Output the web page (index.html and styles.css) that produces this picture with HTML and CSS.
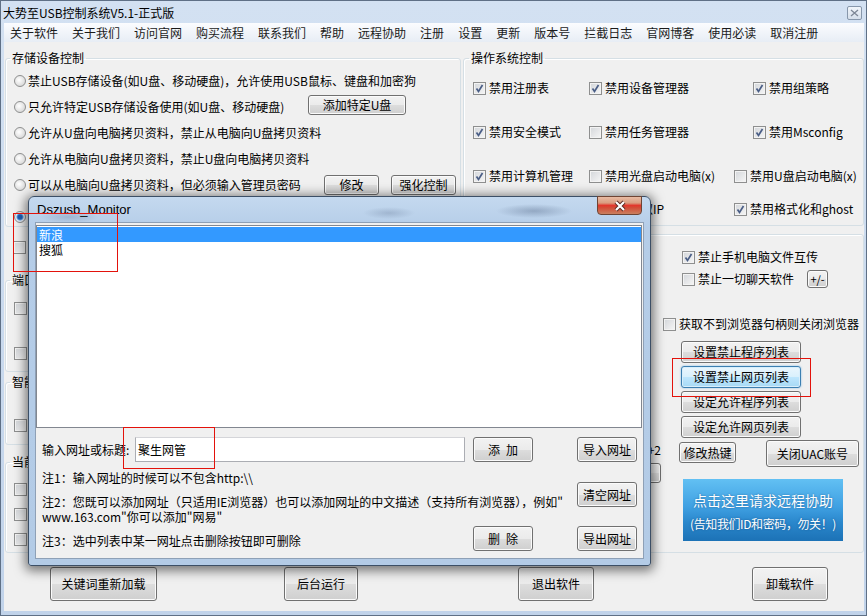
FILE: index.html
```html
<!DOCTYPE html>
<html lang="zh-CN">
<head>
    <meta charset="UTF-8">
    <title>大势至USB控制系统V5.1-正式版</title>
    <link rel="stylesheet" href="styles.css">
</head>
<body>

<div class="window">

    <!-- Title bar -->
    <div class="titlebar">
        <span class="title">大势至USB控制系统V5.1-正式版</span>
        <span class="tb-close">
            <svg width="9" height="8" viewBox="0 0 9 8"><path d="M1 1l7 6M8 1L1 7" stroke="#7d8796" stroke-width="1.3" fill="none"/></svg>
        </span>
    </div>

    <!-- Menu -->
    <div class="menubar">
        <span>关于软件</span><span>关于我们</span><span>访问官网</span><span>购买流程</span>
        <span>联系我们</span><span>帮助</span><span>远程协助</span><span>注册</span>
        <span>设置</span><span>更新</span><span>版本号</span><span>拦截日志</span>
        <span>官网博客</span><span>使用必读</span><span>取消注册</span>
    </div>

    <div class="client">

        <!-- Left column -->
        <div class="col">
            <fieldset class="grp g-storage">
                <legend>存储设备控制</legend>
                <div class="row"><i class="radio"></i>禁止USB存储设备(如U盘、移动硬盘)，允许使用USB鼠标、键盘和加密狗</div>
                <div class="row"><i class="radio"></i>只允许特定USB存储设备使用(如U盘、移动硬盘)<button class="btn btn-add">添加特定U盘</button></div>
                <div class="row"><i class="radio"></i>允许从U盘向电脑拷贝资料，禁止从电脑向U盘拷贝资料</div>
                <div class="row"><i class="radio"></i>允许从电脑向U盘拷贝资料，禁止U盘向电脑拷贝资料</div>
                <div class="row"><i class="radio"></i>可以从电脑向U盘拷贝资料，但必须输入管理员密码<button class="btn btn-mod">修改</button><button class="btn btn-strong">强化控制</button></div>
                <div class="row row-last"><i class="radio on"></i></div>
            </fieldset>

            <!-- rows below are covered by the dialog, only their boxes show -->
            <div class="free-row"><i class="cb"></i></div>

            <fieldset class="grp g-port">
                <legend>端口控制</legend>
                <div class="chk-row"><i class="cb"></i>禁用光驱</div>
                <div class="chk-row second"><i class="cb"></i>禁用软驱</div>
            </fieldset>

            <fieldset class="grp g-smart">
                <legend>智能识别</legend>
                <div class="chk-row"><i class="cb"></i>智能识别U盘</div>
            </fieldset>

            <fieldset class="grp g-now">
                <legend>当前状态</legend>
                <div class="chk-row"><i class="cb"></i></div>
                <div class="chk-row"><i class="cb"></i></div>
                <div class="chk-row"><i class="cb"></i></div>
            </fieldset>
        </div>

        <!-- Right column -->
        <div class="col">
            <fieldset class="grp g-os">
                <legend>操作系统控制</legend>
                <div class="os-grid">
                    <label class="chk"><i class="cb on"><svg viewBox="0 0 11 11"><path d="M2.5 5.5l2 3 4-6.5" /></svg></i>禁用注册表</label>
                    <label class="chk"><i class="cb on"><svg viewBox="0 0 11 11"><path d="M2.5 5.5l2 3 4-6.5" /></svg></i>禁用设备管理器</label>
                    <label class="chk"><i class="cb on"><svg viewBox="0 0 11 11"><path d="M2.5 5.5l2 3 4-6.5" /></svg></i>禁用组策略</label>

                    <label class="chk"><i class="cb on"><svg viewBox="0 0 11 11"><path d="M2.5 5.5l2 3 4-6.5" /></svg></i>禁用安全模式</label>
                    <label class="chk"><i class="cb"></i>禁用任务管理器</label>
                    <label class="chk"><i class="cb on"><svg viewBox="0 0 11 11"><path d="M2.5 5.5l2 3 4-6.5" /></svg></i>禁用Msconfig</label>

                    <label class="chk"><i class="cb on"><svg viewBox="0 0 11 11"><path d="M2.5 5.5l2 3 4-6.5" /></svg></i>禁用计算机管理</label>
                    <label class="chk"><i class="cb"></i>禁用光盘启动电脑(x)</label>
                    <label class="chk shift"><i class="cb"></i>禁用U盘启动电脑(x)</label>

                    <label class="chk"><i class="cb"></i>禁用修改IP</label>
                    <label class="chk"><i class="cb"></i>禁止获取IP</label>
                    <label class="chk shift"><i class="cb on"><svg viewBox="0 0 11 11"><path d="M2.5 5.5l2 3 4-6.5" /></svg></i>禁用格式化和ghost</label>
                </div>
            </fieldset>

            <fieldset class="grp g-net">
                <legend>网络控制</legend>
                <div class="net-grid">
                    <div class="net-left">
                        <div class="chk-row"><i class="cb"></i>禁止修改网络属性</div>
                        <div class="chk-row"><i class="cb"></i>禁止添加新网络连接</div>
                        <div class="chk-row"><i class="cb"></i>禁止Ping命令</div>
                        <div class="chk-row"><i class="cb"></i>禁止FTP</div>
                        <div class="chk-row"><i class="cb"></i>禁止Telnet</div>
                        <div class="chk-row"><i class="cb"></i>禁止网络共享</div>
                        <div class="chk-row"><i class="cb"></i>禁止邮件附件</div>
                        <div class="chk-row"><i class="cb"></i>禁止迅雷下载</div>
                        <div class="chk-row"><i class="cb"></i>禁止P2P软件</div>
                        <div class="hotkey">+2</div>
                        <button class="btn btn-edge"></button>
                    </div>
                    <div class="net-right">
                        <label class="chk indent"><i class="cb on"><svg viewBox="0 0 11 11"><path d="M2.5 5.5l2 3 4-6.5" /></svg></i>禁止手机电脑文件互传</label>
                        <div class="chat-row">
                            <label class="chk"><i class="cb"></i>禁止一切聊天软件</label>
                            <button class="btn btn-pm">+/-</button>
                        </div>
                        <label class="chk browser"><i class="cb"></i>获取不到浏览器句柄则关闭浏览器</label>
                        <button class="btn btn-list first">设置禁止程序列表</button>
                        <button class="btn btn-list btn-focus">设置禁止网页列表</button>
                        <button class="btn btn-list">设定允许程序列表</button>
                        <button class="btn btn-list">设定允许网页列表</button>
                        <div class="key-row">
                            <button class="btn btn-key">修改热键</button>
                            <button class="btn btn-uac">关闭UAC账号</button>
                        </div>
                        <div class="remote">
                            <div class="remote-main">点击这里请求远程协助</div>
                            <div class="remote-sub">(告知我们ID和密码，勿关！)</div>
                        </div>
                    </div>
                </div>
            </fieldset>
        </div>

        <!-- Bottom buttons -->
        <div class="bottom-bar">
            <button class="btn btn-big w107">关键词重新加载</button>
            <button class="btn btn-big w74">后台运行</button>
            <button class="btn btn-big w76">退出软件</button>
            <button class="btn btn-big w76">卸载软件</button>
        </div>
    </div>

    <!-- Dszusb_Monitor dialog -->
    <div class="dialog">
        <div class="dlg-title">Dszusb_Monitor</div>
        <span class="dlg-x">
            <svg width="16" height="12" viewBox="0 0 16 12"><path d="M4 2l8 8M12 2l-8 8" stroke="#5a2a20" stroke-width="4" fill="none"/><path d="M4 2l8 8M12 2l-8 8" stroke="#fff" stroke-width="2.2" fill="none"/></svg>
        </span>
        <div class="dlg-client">
            <div class="listbox">
                <div class="li selected">新浪</div>
                <div class="li">搜狐</div>
            </div>
            <div class="dlg-form">
                <div class="form-main">
                    <div class="in-row">
                        <span class="in-label">输入网址或标题:</span>
                        <span class="input">聚生网管</span>
                        <button class="btn btn-dlg">添&ensp;加</button>
                    </div>
                    <div class="note note1">注1：输入网址的时候可以不包含http:\\</div>
                    <div class="note note2">注2：您既可以添加网址（只适用IE浏览器）也可以添加网址的中文描述（支持所有浏览器），例如"<br>www.163.com"你可以添加"网易"</div>
                    <div class="del-row">
                        <span class="note note3">注3：选中列表中某一网址点击删除按钮即可删除</span>
                        <button class="btn btn-dlg">删&ensp;除</button>
                    </div>
                </div>
                <div class="form-side">
                    <button class="btn btn-dlg">导入网址</button>
                    <button class="btn btn-dlg clear">清空网址</button>
                    <button class="btn btn-dlg export">导出网址</button>
                </div>
            </div>
        </div>
    </div>

    <!-- Red annotation boxes -->
    <div class="mark mark-list"></div>
    <div class="mark mark-input"></div>
    <div class="mark mark-btn"></div>
</div>

</body>
</html>
```

FILE: styles.css
```css
* {
    box-sizing: border-box;
}

body {
    margin: 0;
    font-family: "Noto Sans CJK SC", "Liberation Sans", sans-serif;
    font-size: 12px;
    line-height: 14px;
    color: #000;
    background: #fff;
}

button {
    font-family: inherit;
    font-size: 12px;
    line-height: 14px;
    color: #000;
    padding: 0;
}

/* Main window */
.window {
    position: relative;
    width: 867px;
    height: 616px;
    border: 1px solid #5f7086;
    background: linear-gradient(#d3e1f2, #c1d3ea);
    display: flex;
    flex-direction: column;
    overflow: hidden;
}

.titlebar {
    height: 22px;
    display: flex;
    align-items: center;
    padding: 1px 4px 0 2px;
}

.title {
    flex: 1;
}

.tb-close {
    width: 15px;
    height: 14px;
    border: 1px solid #8797ab;
    border-radius: 2px;
    background: linear-gradient(#f1f5fa, #d5dfeb);
    display: flex;
    align-items: center;
    justify-content: center;
}

.menubar {
    height: 19px;
    margin: 0 2px 0 3px;
    padding-left: 6px;
    display: flex;
    align-items: center;
    gap: 14px;
    background: linear-gradient(#fbfcfe, #e7edf5);
    color: #1a1a1a;
}

.client {
    flex: 1;
    margin: 0 2px 4px 3px;
    padding: 9px 0 0 1px;
    background: #f0f0f0;
    display: grid;
    grid-template-columns: 456px 401px;
    align-content: start;
    column-gap: 2px;
}

.col {
    display: flex;
    flex-direction: column;
}

/* Group boxes */
.grp {
    margin: 0;
    min-width: 0;
    border: 1px solid #d5dfe5;
    border-radius: 3px;
    padding: 0 4px 0 8px;
    box-shadow: inset 1px 1px 0 #fff;
}

.grp legend {
    margin-left: -4px;
    padding: 0 2px;
    line-height: 14px;
}

.row {
    height: 26px;
    display: flex;
    align-items: center;
    white-space: nowrap;
}

.g-storage {
    padding-top: 3px;
}

.g-storage .row-last {
    height: 18px;
    margin-top: 10px;
}

.free-row {
    height: 20px;
    margin-top: 10px;
    padding-left: 8px;
    display: flex;
    align-items: center;
}

.chk-row {
    height: 20px;
    display: flex;
    align-items: center;
    white-space: nowrap;
}

.g-port {
    margin-top: 16px;
    padding-top: 11px;
    padding-bottom: 8px;
}

.g-port .second {
    margin-top: 25px;
}

.g-smart {
    margin-top: 3px;
    padding-top: 26px;
    padding-bottom: 9px;
}

.g-now {
    margin-top: 10px;
    padding-top: 10px;
    padding-bottom: 3px;
}

.g-now .chk-row + .chk-row {
    margin-top: 5px;
}

/* Radio & checkbox */
.radio {
    width: 12px;
    height: 12px;
    margin-right: 2px;
    flex: none;
    border: 1px solid #8e8f8f;
    border-radius: 50%;
    background: radial-gradient(circle at 40% 40%, #ffffff, #dcdcdc 70%, #c8c8c8);
}

.radio.on {
    background: radial-gradient(circle, #1d5fb5 0 2px, #5b9be3 3px, #e9f1fb 4px, #d0d6de);
}

.cb {
    width: 13px;
    height: 13px;
    margin-right: 3px;
    flex: none;
    border: 1px solid #8e8f8f;
    background: linear-gradient(135deg, #d3d6da, #f6f6f6);
    box-shadow: inset 0 0 0 1px #f3f3f3;
    display: inline-flex;
    align-items: center;
    justify-content: center;
}

.cb svg {
    width: 11px;
    height: 11px;
}

.cb svg path {
    stroke: #4a5e86;
    stroke-width: 1.7;
    fill: none;
}

.chk {
    height: 16px;
    display: flex;
    align-items: center;
    white-space: nowrap;
}

/* Buttons */
.btn {
    border: 1px solid #707070;
    border-radius: 3px;
    background: linear-gradient(#f2f2f2 0%, #ebebeb 50%, #dddddd 51%, #cfcfcf 100%);
    box-shadow: inset 0 0 0 1px #fbfbfb;
    white-space: nowrap;
}

.btn-add {
    width: 98px;
    height: 20px;
    margin-left: auto;
    margin-right: 50px;
    margin-top: -5px;
}

.btn-mod {
    width: 55px;
    height: 20px;
    margin-left: auto;
}

.btn-strong {
    width: 65px;
    height: 20px;
    margin-left: 12px;
}

/* Operating system group */
.g-os {
    padding: 12px 0 5px 9px;
}

.os-grid {
    display: grid;
    grid-template-columns: 116px 164px 1fr;
    grid-template-rows: 22px 44px 44px 33px;
    align-items: end;
}

.os-grid .chk {
    height: 22px;
}

.os-grid .shift {
    margin-left: -19px;
}

/* Network group */
.g-net {
    margin-top: 1px;
    padding: 0 0 11px 0;
    flex: 1;
}

.net-grid {
    display: grid;
    grid-template-columns: 198px 1fr;
}

.net-left {
    display: flex;
    flex-direction: column;
    align-items: flex-end;
}

.net-left .chk-row {
    height: 22px;
    align-self: flex-start;
    padding-left: 9px;
}

.hotkey {
    margin-top: 4px;
    margin-right: 1px;
    white-space: nowrap;
}

.btn-edge {
    width: 50px;
    height: 20px;
    margin-top: 6px;
    margin-right: 1px;
}

.net-right {
    display: flex;
    flex-direction: column;
    align-items: flex-start;
}

.net-right .indent {
    margin-top: 8px;
    margin-left: 20px;
}

.chat-row {
    height: 18px;
    margin-top: 5px;
    margin-left: 20px;
    display: flex;
    align-items: center;
}

.btn-pm {
    width: 21px;
    height: 18px;
    margin-left: 13px;
    font-size: 11px;
}

.net-right .browser {
    margin-top: 28px;
    margin-left: 1px;
}

.btn-list {
    width: 120px;
    height: 22px;
    margin-top: 3px;
    margin-left: 19px;
}

.btn-list.first {
    margin-top: 9px;
}

.btn-focus {
    border-color: #3c7fb1;
    background: linear-gradient(#eaf6fd 0%, #d9f0fc 50%, #bee6fd 51%, #a7d9f5 100%);
    box-shadow: inset 0 0 0 1px #d8eefb, 0 0 2px #7ab6e2;
}

.key-row {
    height: 27px;
    margin-top: 2px;
    margin-left: 17px;
    display: flex;
    align-items: flex-start;
}

.btn-key {
    width: 57px;
    height: 21px;
    margin-top: 2px;
}

.btn-uac {
    width: 93px;
    height: 27px;
    margin-left: 30px;
}

.remote {
    width: 160px;
    height: 62px;
    margin-top: 12px;
    margin-left: 21px;
    padding-top: 12px;
    color: #fff;
    text-align: center;
    background: linear-gradient(#62c0f3 0%, #3fa0e2 45%, #2a87cc 70%, #1c72b6 100%);
    text-shadow: 0 0 2px rgba(0, 40, 90, 0.5);
}

.remote-main {
    font-size: 14px;
    line-height: 18px;
}

.remote-sub {
    margin-top: 6px;
    line-height: 18px;
    letter-spacing: -0.4px;
}

/* Bottom row */
.bottom-bar {
    grid-column: 1 / -1;
    margin-top: 14px;
    padding-left: 45px;
    display: grid;
    grid-template-columns: repeat(4, 234px);
    justify-items: start;
}

.btn-big {
    height: 34px;
}

.w107 { width: 107px; }
.w74 { width: 74px; }
.w76 { width: 76px; }

/* Dialog window */
.dialog {
    position: absolute;
    left: 27px;
    top: 195px;
    width: 623px;
    height: 370px;
    z-index: 5;
    padding: 0 6px 6px;
    display: flex;
    flex-direction: column;
    border: 1px solid #3c4f66;
    border-radius: 6px 6px 3px 3px;
    background:
        radial-gradient(ellipse 38px 7px at 505px 14px, rgba(95, 115, 145, 0.45), transparent),
        radial-gradient(ellipse 26px 6px at 360px 16px, rgba(95, 115, 145, 0.3), transparent),
        radial-gradient(ellipse 30px 6px at 40px 20px, rgba(95, 115, 145, 0.3), transparent),
        linear-gradient(#c4d9ef, #b5cde8 30px, #b3cbe6);
    box-shadow: 0 2px 11px 3px rgba(0, 0, 0, 0.5);
}

.dlg-title {
    height: 25px;
    padding: 1px 0 0 2px;
    display: flex;
    align-items: center;
    font-family: "Liberation Sans", sans-serif;
    font-size: 13px;
}

.dlg-x {
    position: absolute;
    top: -1px;
    right: 8px;
    width: 45px;
    height: 19px;
    border: 1px solid #6e4434;
    border-radius: 0 0 4px 4px;
    background: linear-gradient(#e8bba3 0%, #d99d80 35%, #e2372c 50%, #d34b35 62%, #c9805f 100%);
    display: flex;
    align-items: center;
    justify-content: center;
}

.dlg-client {
    flex: 1;
    padding-top: 2px;
    border: 1px solid #8ea0b6;
    background: #f0f0f0;
}

.listbox {
    width: 606px;
    height: 203px;
    padding-top: 1px;
    border: 1px solid #828790;
    background: #fff;
}

.li {
    height: 15px;
    padding-left: 2px;
    line-height: 15px;
}

.li.selected {
    background: #3399ff;
    color: #fff;
}

.dlg-form {
    margin-top: 9px;
    padding-left: 6px;
    display: flex;
}

.form-main {
    width: 491px;
}

.in-row {
    height: 25px;
    display: flex;
    align-items: center;
}

.in-label {
    width: 93px;
    white-space: nowrap;
}

.input {
    width: 330px;
    height: 25px;
    padding: 5px 0 0 2px;
    border: 1px solid #abadb3;
    border-top-color: #d4d5d9;
    background: #fff;
}

.btn-dlg {
    width: 60px;
    height: 25px;
    flex: none;
}

.in-row .btn-dlg {
    margin-left: 8px;
}

.note {
    white-space: nowrap;
}

.note1 {
    margin-top: 9px;
}

.note2 {
    margin-top: 9px;
    line-height: 15px;
}

.del-row {
    height: 25px;
    margin-top: 2px;
    display: flex;
    align-items: center;
}

.note3 {
    width: 431px;
    padding-top: 5px;
}

.form-side {
    margin-left: 44px;
    display: flex;
    flex-direction: column;
}

.form-side .clear {
    margin-top: 20px;
}

.form-side .export {
    margin-top: 19px;
}

/* Red annotation boxes */
.mark {
    position: absolute;
    z-index: 10;
    border: 1px solid #e3120b;
}

.mark-list {
    left: 12px;
    top: 212px;
    width: 105px;
    height: 59px;
}

.mark-input {
    left: 122px;
    top: 426px;
    width: 92px;
    height: 42px;
}

.mark-btn {
    left: 671px;
    top: 357px;
    width: 139px;
    height: 39px;
}
```
